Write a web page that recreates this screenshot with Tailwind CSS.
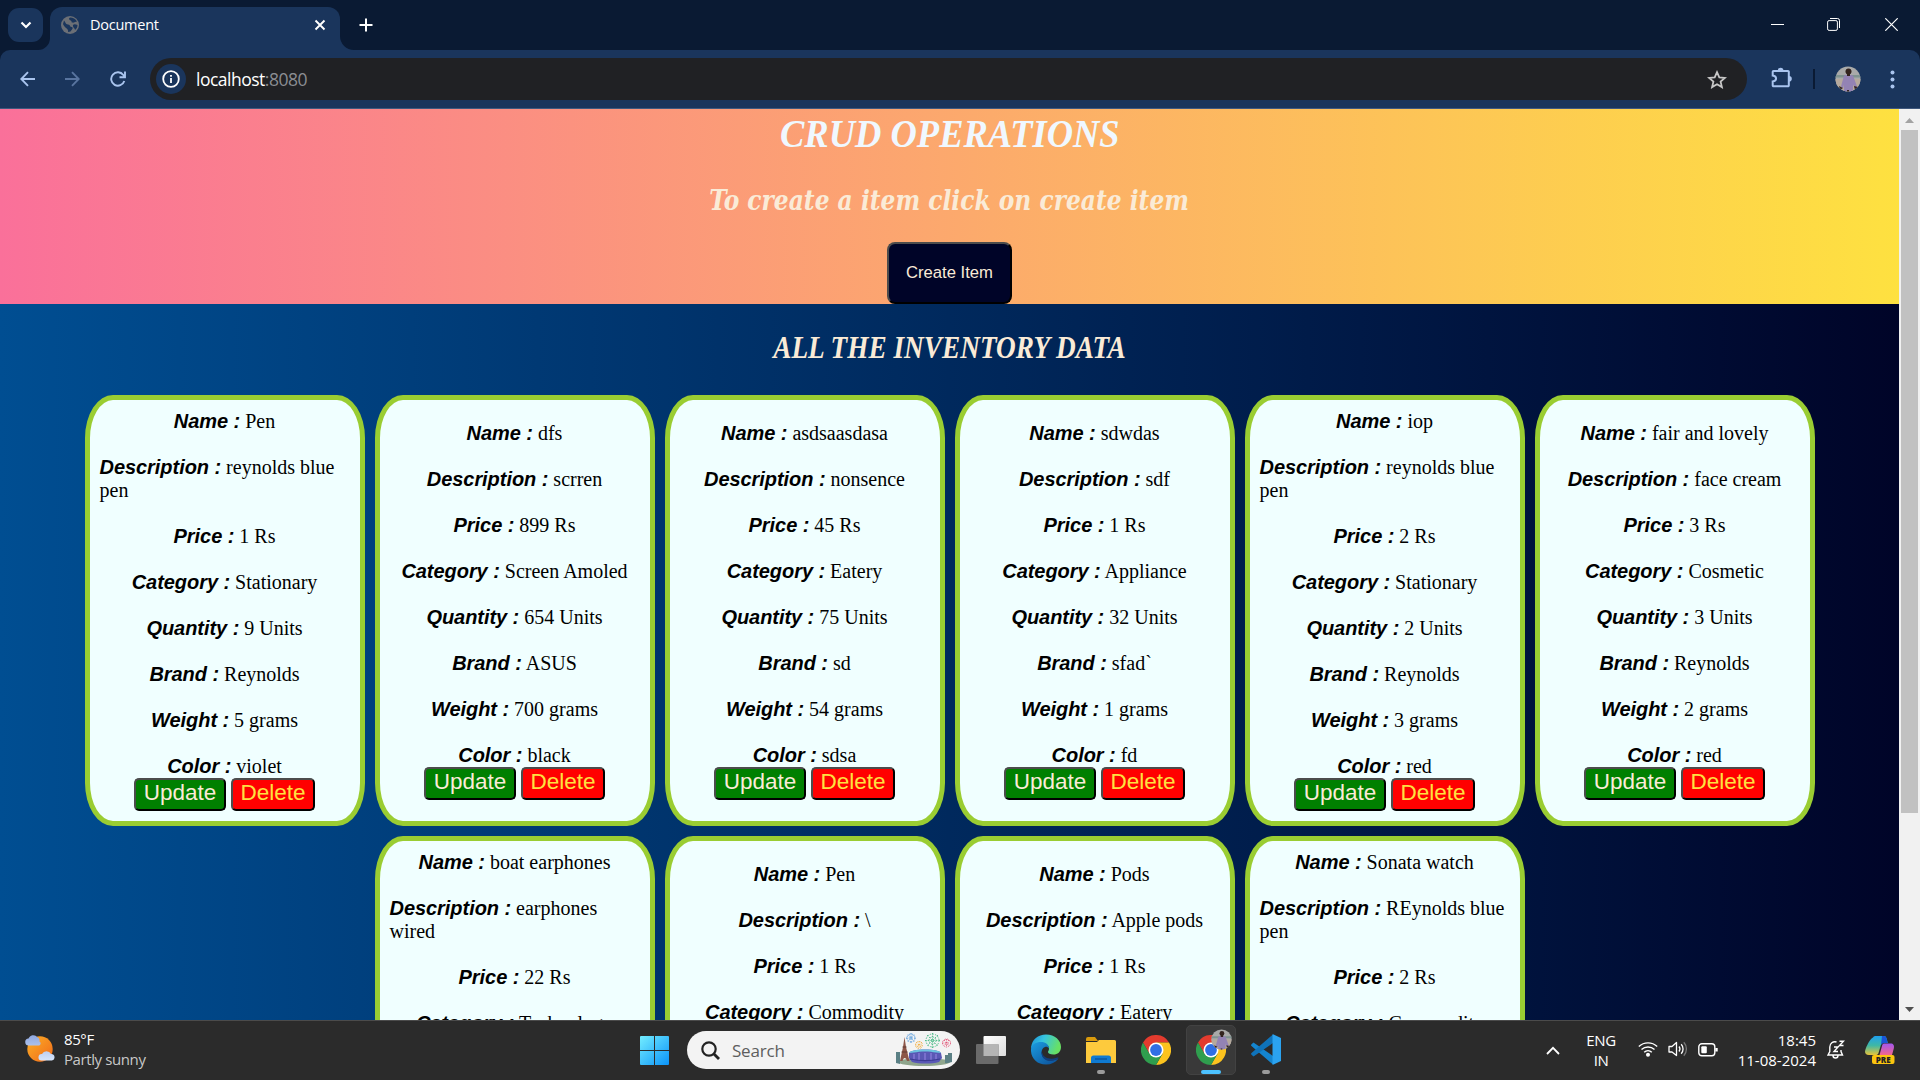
<!DOCTYPE html>
<html lang="en">
<head>
<meta charset="utf-8">
<title>Document</title>
<script src="https://cdn.jsdelivr.net/npm/@tailwindcss/browser@4"></script>
</head>
<body class="w-[1920px] h-[1080px] overflow-hidden flex flex-col font-['Open_Sans',sans-serif] bg-[#0a1a33]">

<!-- Tab strip -->
<header class="h-[50px] shrink-0 flex bg-[#0a1a33] text-white">
  <div class="w-[50px] pl-2 pt-2 relative">
    <div class="w-[35px] h-[34px] rounded-[11px] bg-[#1a355c] flex items-center justify-center">
      <svg width="12" height="8" viewBox="0 0 12 8" fill="none" stroke="#fff" stroke-width="2.2"><path d="M1.5 1.5 6 6l4.500-4.500"/></svg>
    </div>
    <svg class="absolute right-0 bottom-0" width="12" height="12" viewBox="0 0 12 12"><path d="M12 0v12H0A12 12 0 0 0 12 0z" fill="#1a355c"/></svg>
  </div>
  <div class="w-[290px] mt-[7px] h-[43px] rounded-t-[12px] bg-[#1a355c] flex items-start relative">
    <svg class="ml-[11px] mt-[9px]" width="18" height="18" viewBox="0 0 18 18"><circle cx="9" cy="9" r="9" fill="#6b6f76"/><path d="M3 4.500C5 6.500 4 8 7 8.500s1 2 3.500 2.500.5 2.500-1 4.500L7 16c.5-2-.5-3-2-4S2.500 9 2 8zM8 2.500c0 2 2.500 1.500 2.500 3s2 1.500 3.500.5l2-.5A8 8 0 0 0 9 1.500zM12 9c1.500-1.500 3 0 4.500 0 0 2-1 4-2.500 5 0-2-2.500-2.500-2-5z" fill="#1a355c"/></svg>
    <span class="ml-[11px] mt-[7px] text-[14.5px] leading-[22px] tracking-[-0.25px]">Document</span>
    <svg class="absolute left-[264px] top-[12px]" width="12" height="12" viewBox="0 0 12 12" stroke="#fff" stroke-width="1.900"><path d="M1.500 1.500l9 9M10.500 1.500l-9 9"/></svg>
    <svg class="absolute -right-[14px] bottom-0" width="14" height="14" viewBox="0 0 14 14"><path d="M0 0v14h14A14 14 0 0 1 0 0z" fill="#1a355c"/></svg>
  </div>
  <svg class="ml-[19px] mt-[18px]" width="14" height="14" viewBox="0 0 14 14" stroke="#fff" stroke-width="2"><path d="M7 .5v13M.5 7h13"/></svg>
  <div class="ml-auto flex">
    <svg class="mt-[24px] mr-[43px]" width="13" height="1"><rect width="13" height="1" fill="#fff"/></svg>
    <svg class="mt-[18px] mr-[45px]" width="13" height="13" viewBox="0 0 13 13" fill="none" stroke="#fff"><rect x=".6" y="2.600" width="9.800" height="9.800" rx="1.500"/><path d="M3 .5h7.500a2 2 0 0 1 2 2V10"/></svg>
    <svg class="mt-[18px] mr-[22px]" width="13" height="13" viewBox="0 0 13 13" stroke="#fff" stroke-width="1.200"><path d="M.3.3l12.400 12.400M12.700.3.3 12.700"/></svg>
  </div>
</header>

<!-- Toolbar -->
<div class="h-[59px] shrink-0 bg-[#1a355c] border-b border-[#3f587e] rounded-t-[10px] flex items-center">
  <svg class="ml-[20px]" width="16" height="16" viewBox="0 0 16 16" fill="none" stroke="#a9c4ee" stroke-width="1.900"><path d="M15 8H1.500M8 1.200 1.300 8 8 14.800"/></svg>
  <svg class="ml-[28px]" width="16" height="16" viewBox="0 0 16 16" fill="none" stroke="#58749f" stroke-width="1.900"><path d="M1 8h13.500M8 1.200 14.700 8 8 14.800"/></svg>
  <svg class="ml-[30px]" width="16" height="16" viewBox="0 0 16 16" fill="none" stroke="#a9c4ee" stroke-width="1.900"><path d="M14.300 10A6.700 6.700 0 1 1 13.300 4L15 6M15 .5V6.200H9.500"/></svg>
  <div class="ml-[24px] w-[1597px] h-[42px] rounded-full bg-[#202124] flex items-center">
    <div class="ml-1.5 w-[30px] h-[30px] rounded-full bg-[#1a355c] flex items-center justify-center">
      <svg width="18" height="18" viewBox="0 0 18 18" fill="none" stroke="#fff" stroke-width="1.800"><circle cx="9" cy="9" r="7.800"/><path d="M9 8v5M9 5v1.800"/></svg>
    </div>
    <span class="ml-[10px] text-[17.5px] tracking-[-0.5px] text-white">localhost<span class="text-[#8b8e93]">:8080</span></span>
    <svg class="ml-auto mr-[20px]" width="20" height="19" viewBox="0 0 20 19" fill="none" stroke="#c7c7c7" stroke-width="1.800"><path d="M10 2.200l2.300 5.200 5.600.5-4.300 3.700 1.300 5.500L10 14.200l-4.900 2.900 1.300-5.500L2.100 7.900l5.600-.5z"/></svg>
  </div>
  <svg class="ml-[23px] -mt-1" width="22" height="21" viewBox="0 0 22 21"><path d="M3.500 4h14.500a.8.800 0 0 1 .8.800v13.700a.8.800 0 0 1-.8.800H3.500a.8.800 0 0 1-.8-.8v-4c4.500-.5 4.500-5.500 0-6V4.800a.8.800 0 0 1 .8-.8z" fill="none" stroke="#a9c4ee" stroke-width="2"/><path d="M7.800 3.500a2.800 2.800 0 0 1 5.600 0zM19 9a2.800 2.800 0 0 1 0 5.600z" fill="#a9c4ee"/></svg>
  <div class="ml-[21px] w-[2px] h-[20px] bg-[#0a1a33]"></div>
  <svg class="ml-[20px]" width="26" height="26" viewBox="0 0 26 26"><defs><clipPath id="av"><circle cx="13" cy="13" r="12.500"/></clipPath><g id="person" clip-path="url(#av)"><path fill="#a9aaa9" d="M0 0h26v26H0z"/><path fill="#7f9390" d="M0 9h26v2.500H0z"/><path fill="#b5a99d" d="M0 13h26v13H0z"/><path fill="#9383b4" d="M9 9.500l4-1 5 1 4 11-2 2-2-4v7H9v-7l-1 4-2-2z"/><circle cx="13.500" cy="5.500" r="3" fill="#33241f"/><path fill="#33241f" d="M12 7h3v3h-3zM4 20l4 2-3 2zM19 20l4 1-3 3zM12 24h2v2h-2z"/></g></defs><use href="#person"/></svg>
  <svg class="ml-[29px]" width="5" height="19" viewBox="0 0 5 19" fill="#a9c4ee"><circle cx="2.500" cy="2.500" r="2"/><circle cx="2.500" cy="9.500" r="2"/><circle cx="2.500" cy="16.500" r="2"/></svg>
</div>

<!-- Page viewport -->
<div class="h-[911px] shrink-0 flex overflow-hidden">
  <main class="w-[1899px] h-[911px] overflow-hidden bg-[linear-gradient(to_left,#000428,#004e92)]">
    <section class="h-[195px] flex flex-col items-center bg-[linear-gradient(to_right,#fa709a,#fee140)] font-['Liberation_Serif',serif] font-bold italic">
      <h1 class="h-[47px] leading-[48px] text-[41px] text-[#f0f8ff] whitespace-nowrap scale-x-[0.89]">CRUD OPERATIONS</h1>
      <h2 class="mt-[26px] h-[36px] leading-[36px] text-[27.5px] text-[#faebd7] whitespace-nowrap scale-x-[0.944] font-['DejaVu_Serif_Condensed','DejaVu_Serif',serif]">To create a item click on create item</h2>
      <button class="mt-[24px] w-[125px] h-[62px] pb-0.5 rounded-[8px] border-2 border-t-[#4c4c4c] border-l-[#4c4c4c] border-r-black border-b-black bg-[#000428] text-[#faebd7] not-italic font-normal font-['Liberation_Sans',sans-serif] text-[16.67px]">Create Item</button>
    </section>
    <h2 class="mt-[26px] h-[35px] leading-[36px] text-center text-[30.5px] text-[#faebd7] font-['Liberation_Serif',serif] font-bold italic scale-x-[0.895]">ALL THE INVENTORY DATA</h2>
    <section id="items" class="mt-[30px] flex flex-wrap justify-center gap-2.5 text-xl/[23px] text-black font-['Liberation_Serif',serif]"></section>
  </main>
  <aside class="w-[21px] h-full bg-[#f1f1f1] flex flex-col items-center">
    <svg class="mt-[9px]" width="9" height="5"><path d="M0 5 4.500 0 9 5z" fill="#a3a3a3"/></svg>
    <div class="mt-[7px] w-[17px] h-[683px] bg-[#c1c1c1]"></div>
    <svg class="mt-auto mb-[8px]" width="9" height="5"><path d="M0 0h9L4.500 5z" fill="#505050"/></svg>
  </aside>
</div>

<!-- Taskbar -->
<footer class="h-[60px] shrink-0 bg-[#2b2b2b] border-t border-[#4b4b4b] flex text-white relative">
  <svg class="ml-[25px] mt-[13px] shrink-0" width="31" height="30" viewBox="0 0 31 30"><defs><linearGradient id="sun" x1="0" x2="1" y1="0" y2="1"><stop stop-color="#fcb026"/><stop offset="1" stop-color="#f0691a"/></linearGradient><linearGradient id="cl" x2="0" y2="1"><stop stop-color="#8fa8e0"/><stop offset="1" stop-color="#d7e5fb"/></linearGradient></defs><circle cx="15" cy="15" r="12.700" fill="url(#sun)"/><path d="M4 11.500a3.500 3.500 0 0 1-.5-7A5 5 0 0 1 12 3a4 4 0 0 1 2.500 4.500 2.200 2.200 0 0 1-.5 4zM16.500 26.500a3.200 3.200 0 0 1 .5-6.500 5 5 0 0 1 9 0 3.300 3.300 0 0 1 1 6.500z" fill="url(#cl)"/></svg>
  <div class="ml-[8px] mt-[8px] text-[15px] leading-[20px] tracking-[-0.4px] whitespace-nowrap w-[120px]"><div>85°F</div><div class="text-[#c8c8c8]">Partly sunny</div></div>

  <svg class="ml-[456px] mt-[15px] shrink-0" width="29" height="29" viewBox="0 0 29 29"><defs><linearGradient id="win" x2="1" y2="1"><stop stop-color="#73edff"/><stop offset="1" stop-color="#0b93f8"/></linearGradient></defs><path fill="url(#win)" d="M1 0h13v14H0V1a1 1 0 0 1 1-1zM15 0h13a1 1 0 0 1 1 1v13H15zM0 15h14v14H1a1 1 0 0 1-1-1zM15 15h14v13a1 1 0 0 1-1 1H15z"/></svg>

  <div class="ml-[18px] mt-[10px] w-[273px] h-[38px] rounded-full bg-[#f3f3f3] flex items-center shrink-0">
    <svg class="ml-[14px]" width="19" height="19" viewBox="0 0 19 19" fill="none" stroke="#222" stroke-width="2.200"><circle cx="8" cy="8" r="6.700"/><path d="M12.500 12.500l5.500 5.500" stroke-width="2.800"/></svg>
    <span class="ml-[12px] mt-0.5 text-[17px] text-[#5e5e5e] tracking-[-0.2px]">Search</span>
    <svg class="ml-auto mr-[7px]" width="58" height="34" viewBox="0 0 58 34">
      <ellipse cx="29" cy="29" rx="26" ry="4" fill="#8fa58c"/>
      <path d="M1 19h4v12l-4-1zM50 22h3v8h-3zM53 20h4v9l-4 1z" fill="#5b8085"/>
      <path d="M14 20c1-2 7-3.500 16-3.500s15 1.500 16 3.500l1 5-3 4c-7 2-20 2-27 0l-3-4z" fill="#5a58b5"/><path d="M14 20c1-2 7-3.500 16-3.500s15 1.500 16 3.500l-5-.500c-6-1.500-16-1.500-22 0z" fill="#6cc4e0"/><path d="M19 21v6M24 20v8M30 20v8M36 20v8M41 21v6" stroke="#8e7fdc" stroke-width="1.200"/><path d="M15 26c9 2 21 2 30 0" stroke="#3b3a92" stroke-width="1.200" fill="none"/>
      <path d="M9.500 4l1.500 10L14.500 28H12c-1-4-3.500-4-4.500 0H5L8 14z" fill="#8d5648"/><path d="M6.500 19h6M7.500 14h4" stroke="#633a33"/>
      <g fill="none" stroke-width=".9" stroke-dasharray="1.500 1.200"><g stroke="#4a93d8"><circle cx="16" cy="5" r="4"/><path d="M11 5h10M16 0v10M13 1.500l6 7M19 1.500l-6 7"/></g><g stroke="#45b983"><circle cx="37.500" cy="7.500" r="6.500"/><circle cx="37.500" cy="7.500" r="3.500"/><path d="M30 7.500h15M37.500 0v15M32 2l11 11M43 2 32 13"/></g><g stroke="#f0b24c"><circle cx="24" cy="12" r="3.500"/><path d="M20 12h8M24 8v8M21 9l6 6M27 9l-6 6"/></g><g stroke="#e25577"><circle cx="51.500" cy="10" r="4"/><path d="M47 10h9M51.500 6v8M49 7l5 6M54 7l-5 6"/></g></g>
    </svg>
  </div>

  <svg class="ml-[16px] mt-[15px] shrink-0" width="30" height="28" viewBox="0 0 30 28"><defs><linearGradient id="tv" x2="1" y2="1"><stop stop-color="#fff"/><stop offset="1" stop-color="#ddd"/></linearGradient></defs><rect x="7.500" width="22.500" height="20" rx="1" fill="url(#tv)"/><rect y="8" width="22.500" height="20" rx="1" fill="#6a6a6a"/><path d="M7.500 8h15v12h-15z" fill="#b5b5b5"/></svg>

  <svg class="ml-[25px] mt-[13px] shrink-0" width="30" height="31" viewBox="0 0 30 31"><defs><linearGradient id="eg" x2="1" y2=".3"><stop stop-color="#1a8fd8"/><stop offset=".45" stop-color="#36c4e0"/><stop offset="1" stop-color="#67e065"/></linearGradient><linearGradient id="eb" x2="1" y2="1"><stop stop-color="#1b9de2"/><stop offset="1" stop-color="#0c4c94"/></linearGradient></defs><path d="M0 13.500C1 5.500 7 .5 15 .5c9 0 15 6 15 12.500 0 5-3.500 7.500-7.500 7.500-3.500 0-5.500-1-5.500-2.500 0-1 1-1.500 1-3.500 0-3-3-5.500-7-5.500C6 9 1.500 11 0 15z" fill="url(#eg)"/><path d="M0 15c.5-4.500 5-7 10-7 4.500 0 8 2.500 8 6.500-1-1.500-2.500-2-4-1.500-3 1-4 4.500-3 8 1.500 5 7.500 7 14 4.500l2.500-1C24.500 28.500 20 30.500 15 30.500 6 30.500-.5 24 0 15z" fill="url(#eb)"/><path d="M10.500 17c-1 7 5 11.500 12 9.500 2-.5 4-1.500 5-2.500-.5-.5-1-.5-2-.2-6 2.200-13 .2-14-4.300z" fill="#123f7e"/></svg>

  <div class="ml-[25px] mt-[14px] w-[30px] shrink-0 flex flex-col items-center">
    <svg width="30" height="30" viewBox="0 0 30 30"><path d="M0 4a2 2 0 0 1 2-2h7l3 4H0z" fill="#d99a0c"/><path d="M0 7h11l2-2h15.500A1.500 1.500 0 0 1 30 6.500V28H0z" fill="#fdca3d"/><path d="M5 28v-5a2.500 2.500 0 0 1 2.500-2.500h15A2.500 2.500 0 0 1 25 23v5z" fill="#0f7ad1"/><path d="M9 24h12" stroke="#0a4d94" stroke-width="1.200"/></svg>
    <div class="mt-[5px] w-2 h-1 rounded-full bg-[#9b9b9b]"></div>
  </div>

  <svg class="ml-[25px] mt-[14px] shrink-0" width="30" height="30" viewBox="0 0 30 30"><g id="chrome"><path d="M2 7.500a15 15 0 0 1 26 0H15L8.500 19z" fill="#e33b2e"/><path d="M28 7.500A15 15 0 0 1 15 30l6.500-11.300L15 7.500z" fill="#fcc31e"/><path d="M2 7.500 8.500 18.700h13L15 30A15 15 0 0 1 2 7.500z" fill="#2f9e4e"/><circle cx="15" cy="15" r="7.500" fill="#fff"/><circle cx="15" cy="15" r="5.900" fill="#2f6fe4"/></g></svg>

  <div class="ml-[15px] mt-[4px] w-[50px] h-[50px] rounded-[5px] bg-[#393939] border border-[#424242] shrink-0 flex flex-col items-center relative">
    <svg class="mt-[9px] shrink-0" width="30" height="30" viewBox="0 0 30 30"><use href="#chrome"/></svg>
    <svg class="absolute left-[24px] top-[3px]" width="21" height="21" viewBox="0 0 26 26"><use href="#person"/></svg>
    <div class="mt-[5px] w-5 h-1 rounded-full bg-[#4cc2ff] shrink-0"></div>
  </div>

  <div class="ml-[15px] mt-[13px] w-[30px] shrink-0 flex flex-col items-center">
    <svg width="30" height="31" viewBox="0 0 30 31"><path d="M2.500 8.500.5 10.300c-.6.500-.6 1.200 0 1.700L22 30.500V22z" fill="#1485cf"/><path d="M2.500 22.500.5 20.700c-.6-.5-.6-1.200 0-1.700L22 .5V9z" fill="#0f73ba"/><path d="M21.500.5 22 .3 30 4v23l-8 3.700-.5-.2z" fill="#2ba3f0"/></svg>
    <div class="mt-[5px] w-2 h-1 rounded-full bg-[#9b9b9b]"></div>
  </div>

  <div class="ml-auto flex shrink-0">
    <svg class="mt-[25px] mr-[26px]" width="14" height="9" viewBox="0 0 14 9" fill="none" stroke="#fff" stroke-width="1.800"><path d="M1 8l6-6.200L13 8"/></svg>
    <div class="mt-[9px] w-[30px] mr-[22px] text-center text-[15px] leading-[20px] tracking-[-0.4px]"><div>ENG</div><div>IN</div></div>
    <svg class="mt-[20px] mr-[10px]" width="20" height="16" viewBox="0 0 20 16" fill="none" stroke="#fff" stroke-width="1.400"><path d="M.8 5.500a13.500 13.500 0 0 1 18.400 0M3.500 8.500a9.500 9.500 0 0 1 13 0M6.200 11.300a5.600 5.600 0 0 1 7.600 0"/><circle cx="10" cy="13.700" r="1.300" fill="#fff"/></svg>
    <svg class="mt-[20px] mr-[10px]" width="20" height="17" viewBox="0 0 20 17" fill="none" stroke="#fff" stroke-width="1.300"><path d="M1 5.500h3L8.500 1.500v13L4 11H1z" stroke-linejoin="round"/><path d="M11 5.500a4 4 0 0 1 0 5M13.200 3.300a7 7 0 0 1 0 9.500"/><path d="M15.800 1.300a10 10 0 0 1 0 13.500" stroke="#777"/></svg>
    <svg class="mt-[22px] mr-[19px]" width="20" height="14" viewBox="0 0 20 14" fill="none" stroke="#fff" stroke-width="1.400"><rect x=".8" y=".8" width="16" height="12" rx="3"/><rect x="3.300" y="3.300" width="5.500" height="7" rx="1" fill="#fff" stroke="none"/><path d="M18.500 5v3.500" stroke-width="2.400"/></svg>
    <div class="mt-[9px] w-[79px] text-right text-[15px] leading-[20px] whitespace-nowrap"><div>18:45</div><div>11-08-2024</div></div>
    <svg class="mt-[19px] ml-[11px] mr-[20px]" width="18" height="20" viewBox="0 0 18 20" fill="none" stroke="#fff" stroke-width="1.400"><path d="M9.500 2C6 .8 2.800 3.500 2.800 7v4.500L1 15h14.500L14 11.500V10M6 15.500a2.500 2.500 0 0 0 5 0M7 7h4l-4 4.500h4M12.500 1.200h4L12.500 5.500h4"/></svg>
    <svg class="mt-[15px] mr-[25px]" width="30" height="30" viewBox="0 0 30 30"><defs><linearGradient id="c1" x2="0" y2="1"><stop stop-color="#1fa0ee"/><stop offset=".5" stop-color="#3fb8a5"/><stop offset="1" stop-color="#e8c33a"/></linearGradient><linearGradient id="c2" x2="0" y2="1"><stop stop-color="#a256f0"/><stop offset="1" stop-color="#f3668c"/></linearGradient></defs><path d="M8 1.500Q8.500 0 10 0h9c2 0 2.500 2 3 4l.8 3H19c-3 0-3 2-4 5l-1.500 5c-.5 1.500-1.500 2-3 2H4c-3.500 0-4.500-2-3.700-5C1.500 10 5 3 8 1.500z" fill="url(#c1)"/><path d="M17 0h2c2 0 2.500 2 3 4l.8 3H19c-1.500 0-2.500 1-3 2z" fill="#1a55d8"/><path d="M19 7.500h6.500c3 0 4 2 3.300 5L27 19H14.500L17 10c.4-1.500.8-2.500 2-2.500z" fill="url(#c2)"/><rect x="7" y="19" width="22.500" height="9" rx="2" fill="#fbc40f"/><text x="18.200" y="26.600" text-anchor="middle" class="font-['Open_Sans'] font-extrabold text-[8px]" fill="#222">PRE</text></svg>
  </div>
</footer>

<script>
const labels = ['Name', 'Description', 'Price', 'Category', 'Quantity', 'Brand', 'Weight', 'Color'];
const items = [
  ['Pen', 'reynolds blue pen', '1 Rs', 'Stationary', '9 Units', 'Reynolds', '5 grams', 'violet'],
  ['dfs', 'scrren', '899 Rs', 'Screen Amoled', '654 Units', 'ASUS', '700 grams', 'black'],
  ['asdsaasdasa', 'nonsence', '45 Rs', 'Eatery', '75 Units', 'sd', '54 grams', 'sdsa'],
  ['sdwdas', 'sdf', '1 Rs', 'Appliance', '32 Units', 'sfad`', '1 grams', 'fd'],
  ['iop', 'reynolds blue pen', '2 Rs', 'Stationary', '2 Units', 'Reynolds', '3 grams', 'red'],
  ['fair and lovely', 'face cream', '3 Rs', 'Cosmetic', '3 Units', 'Reynolds', '2 grams', 'red'],
  ['boat earphones', 'earphones wired', '22 Rs', 'Technology', '2 Units', 'Boat', '20 grams', 'black'],
  ['Pen', '\\', '1 Rs', 'Commodity', '1 Units', 'Pen', '1 grams', 'blue'],
  ['Pods', 'Apple pods', '1 Rs', 'Eatery', '1 Units', 'Apple', '1 grams', 'white'],
  ['Sonata watch', 'REynolds blue pen', '2 Rs', 'Commodity', '2 Units', 'Sonata', '2 grams', 'gold'],
];
document.getElementById('items').innerHTML = items.map(item => `
  <article class="w-[280px] min-h-[431px] border-[5px] border-[#9acd32] rounded-[10%] bg-[#f0ffff] p-2.5 flex flex-col items-center justify-center">
    <div class="flex flex-col items-center gap-[23px]">
      ${item.map((v, i) => `<p><b class="font-['Liberation_Sans',sans-serif] italic leading-none tracking-[-0.05px]">${labels[i]} :</b> ${v}</p>`).join('')}
    </div>
    <div class="flex gap-[5px] font-['Liberation_Sans',sans-serif] text-[22.5px] leading-[26px]">
      <button class="w-[92px] h-[33px] pb-[3px] flex items-center justify-center border-2 border-t-[#4c4c4c] border-l-[#4c4c4c] border-r-black border-b-black rounded-[5px] bg-[#008000] text-[#faebd7]">Update</button>
      <button class="w-[84px] h-[33px] pb-[3px] flex items-center justify-center border-2 border-t-[#4c4c4c] border-l-[#4c4c4c] border-r-black border-b-black rounded-[5px] bg-[#ff0000] text-[#fee140]">Delete</button>
    </div>
  </article>`).join('');
</script>
</body>
</html>
